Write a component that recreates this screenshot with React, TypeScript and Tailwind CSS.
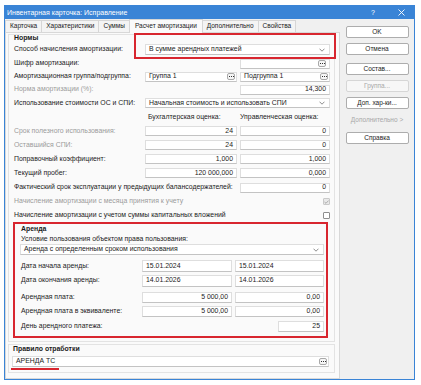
import React from "react";

const Dots = () => (
  <span className="flex h-[7px] w-[8px] shrink-0 items-center justify-center gap-[1px] rounded-[2px] border border-[#a9a9a9] bg-[#f6f6f6]">
    <span className="h-[1px] w-[1px] bg-[#333]" />
    <span className="h-[1px] w-[1px] bg-[#333]" />
    <span className="h-[1px] w-[1px] bg-[#333]" />
  </span>
);

const Chevron = () => (
  <svg width="6" height="4" viewBox="0 0 6 4" className="shrink-0">
    <path d="M0.5 0.7 L3 3.2 L5.5 0.7" fill="none" stroke="#707070" strokeWidth="0.8" />
  </svg>
);

type FP = { cls: string; children?: React.ReactNode; left?: boolean; dots?: boolean };
const F = ({ cls, children, left = false, dots = false }: FP) => (
  <div
    className={`flex shrink-0 items-center border border-[#dedede] border-b-[#c3c3c3] bg-white ${
      left ? "justify-between pl-[3px] pr-[1px]" : "justify-end px-[3px]"
    } ${cls}`}
  >
    {children != null && <span className="whitespace-nowrap leading-none">{children}</span>}
    {dots && <Dots />}
  </div>
);

const Combo = ({ cls, children }: { cls: string; children: React.ReactNode }) => (
  <div
    className={`flex items-center justify-between border border-[#dedede] border-b-[#c3c3c3] bg-white pl-[3px] pr-[4px] ${cls}`}
  >
    <span className="whitespace-nowrap leading-none">{children}</span>
    <Chevron />
  </div>
);

const Btn = ({ children, cls = "", disabled = false, noBorder = false }: { children: React.ReactNode; cls?: string; disabled?: boolean; noBorder?: boolean }) => (
  <div
    className={`flex h-[12px] w-[63px] items-center justify-center rounded-[2px] border text-[6.5px] ${
      noBorder ? "border-transparent bg-transparent text-[#a8a8a8]" : disabled ? "border-[#d6d6d6] bg-[#f7f7f7] text-[#a8a8a8]" : "border-[#adadad] bg-white"
    } ${cls}`}
  >
    {children}
  </div>
);

const Tab = ({ children, active = false }: { children: React.ReactNode; active?: boolean }) => (
  <div
    className={`-ml-px flex items-center border border-b-0 border-[#d6d6d6] text-[6.5px] first:ml-0 ${
      active ? "relative z-10 -mb-px h-[14px] bg-[#fafafa] px-[5px]" : "h-[12px] bg-[#f4f4f4] px-[4px]"
    }`}
  >
    {children}
  </div>
);

const gray = "text-[#9b9b9b]";

export default function App() {
  return (
    <div className="h-[385px] w-[421px] overflow-hidden bg-white pl-[4px] pt-[5px] font-['Liberation_Sans',Arial,sans-serif] text-[6.9px] leading-none text-[#1b1b1b]">
      <div className="flex h-[375px] w-[411px] flex-col border border-[#3a84d6] bg-[#f0f0f0]">
        {/* title bar */}
        <div className="flex h-[13px] shrink-0 items-center bg-[#3a84d6] pl-[2px] pr-[9px] text-[7px] text-white">
          <span>Инвентарная карточка: Исправление</span>
          <span className="ml-auto">?</span>
          <svg width="7" height="7" viewBox="0 0 7 7" className="ml-[23px]">
            <path d="M0.5 0.5 L6.5 6.5 M6.5 0.5 L0.5 6.5" stroke="white" strokeWidth="0.9" />
          </svg>
        </div>

        <div className="flex flex-1">
          {/* left side */}
          <div className="flex w-[335px] flex-col">
            <div className="relative z-10 flex h-[13px] items-end">
              <Tab>Карточка</Tab>
              <Tab>Характеристики</Tab>
              <Tab>Суммы</Tab>
              <Tab active>Расчет амортизации</Tab>
              <Tab>Дополнительно</Tab>
              <Tab>Свойства</Tab>
            </div>
            <div className="flex-1 border border-[#d8d8d8] bg-[#fafafa] pt-[1px]">
              {/* Нормы group */}
              <div className="ml-[2px] w-[327px] border border-[#e3e3e3] pb-[3px] pl-[5px] pr-[4px]">
                <div className="flex h-[7px] items-center font-bold">Нормы</div>
                <div className="flex h-[15px] items-center">
                  <span className="w-[131px] shrink-0 whitespace-nowrap">Способ начисления амортизации:</span>
                  <div className="relative">
                    <div className="absolute -bottom-[4px] -left-[11px] -right-[6px] -top-[11px] border-2 border-[#d8262f]" />
                    <Combo cls="h-[11px] w-[185px]">В сумме арендных платежей</Combo>
                  </div>
                </div>
                <div className="flex h-[13px] items-center">
                  <span className="w-[226px] shrink-0">Шифр амортизации:</span>
                  <F cls="h-[10px] w-[90px]" dots />
                </div>
                <div className="flex h-[13px] items-center">
                  <span className="w-[131px] shrink-0 whitespace-nowrap">Амортизационная группа/подгруппа:</span>
                  <F cls="h-[10px] w-[92px]" left dots>Группа 1</F>
                  <F cls="ml-[3px] h-[10px] w-[90px]" left dots>Подгруппа 1</F>
                </div>
                <div className="flex h-[13px] items-center">
                  <span className={`w-[226px] shrink-0 ${gray}`}>Норма амортизации (%):</span>
                  <F cls="h-[10px] w-[90px]">14,300</F>
                </div>
                <div className="flex h-[14px] items-center">
                  <span className="w-[131px] shrink-0 whitespace-nowrap">Использование стоимости ОС и СПИ:</span>
                  <Combo cls="h-[10px] w-[185px]">Начальная стоимость и использовать СПИ</Combo>
                </div>
                <div className="flex h-[14px] items-center">
                  <span className="w-[131px] shrink-0" />
                  <span className="w-[95px] shrink-0 whitespace-nowrap pl-[3px]">Бухгалтерская оценка:</span>
                  <span className="whitespace-nowrap">Управленческая оценка:</span>
                </div>
                <div className="flex h-[14px] items-center">
                  <span className={`w-[131px] shrink-0 whitespace-nowrap ${gray}`}>Срок полезного использования:</span>
                  <F cls="h-[10px] w-[92px]">24</F>
                  <F cls="ml-[3px] h-[10px] w-[90px]">0</F>
                </div>
                <div className="flex h-[14px] items-center">
                  <span className={`w-[131px] shrink-0 ${gray}`}>Оставшийся СПИ:</span>
                  <F cls="h-[10px] w-[92px]">24</F>
                  <F cls="ml-[3px] h-[10px] w-[90px]">0</F>
                </div>
                <div className="flex h-[14px] items-center">
                  <span className="w-[131px] shrink-0">Поправочный коэффициент:</span>
                  <F cls="h-[10px] w-[92px]">1,000</F>
                  <F cls="ml-[3px] h-[10px] w-[90px]">1,000</F>
                </div>
                <div className="flex h-[14px] items-center">
                  <span className="w-[131px] shrink-0">Текущий пробег:</span>
                  <F cls="h-[10px] w-[92px]">120 000,000</F>
                  <F cls="ml-[3px] h-[10px] w-[90px]">0,000</F>
                </div>
                <div className="flex h-[15px] items-center justify-between">
                  <span className="whitespace-nowrap">Фактический срок эксплуатации у предыдущих балансодержателей:</span>
                  <F cls="h-[10px] w-[90px]">0</F>
                </div>
                <div className="flex h-[13px] items-center justify-between">
                  <span className={gray}>Начисление амортизации с месяца принятия к учету</span>
                  <span className="flex h-[7px] w-[7px] items-center justify-center rounded-[1px] border border-[#c9c9c9] bg-[#e9e9e9]">
                    <svg width="5" height="4" viewBox="0 0 5 4">
                      <path d="M0.5 2 L2 3.3 L4.5 0.6" fill="none" stroke="#9c9c9c" strokeWidth="0.8" />
                    </svg>
                  </span>
                </div>
                <div className="flex h-[14px] items-center justify-between">
                  <span>Начисление амортизации с учетом суммы капитальных вложений</span>
                  <span className="h-[7px] w-[7px] rounded-[1px] border border-[#8e8e8e] bg-white" />
                </div>

                {/* Аренда red box */}
                <div className="-ml-[1px] w-[315px] border-2 border-[#d8262f] pb-[3px]">
                  <div className="flex h-[11px] items-center pl-[6px] font-bold">Аренда</div>
                  <div className="flex h-[8px] items-center pl-[6px]">Условие пользования объектом права пользования:</div>
                  <div className="ml-[5px] mt-[1px]">
                    <Combo cls="h-[11px] w-[304px]">Аренда с определенным сроком использования</Combo>
                  </div>
                  <div className="mt-[4px] flex h-[14px] items-center pl-[6px]">
                    <span className="w-[121px] shrink-0">Дата начала аренды:</span>
                    <F cls="h-[12px] w-[90px]" left>15.01.2024</F>
                    <F cls="ml-[3px] h-[12px] w-[89px]" left>15.01.2024</F>
                  </div>
                  <div className="flex h-[15px] items-center pl-[6px]">
                    <span className="w-[121px] shrink-0">Дата окончания аренды:</span>
                    <F cls="h-[12px] w-[90px]" left>14.01.2026</F>
                    <F cls="ml-[3px] h-[12px] w-[89px]" left>14.01.2026</F>
                  </div>
                  <div className="mt-[2px] flex h-[14px] items-center pl-[6px]">
                    <span className="w-[121px] shrink-0">Арендная плата:</span>
                    <F cls="h-[11px] w-[90px]">5 000,00</F>
                    <F cls="ml-[3px] h-[11px] w-[89px]">0,00</F>
                  </div>
                  <div className="flex h-[15px] items-center pl-[6px]">
                    <span className="w-[121px] shrink-0 whitespace-nowrap">Арендная плата в эквиваленте:</span>
                    <F cls="h-[11px] w-[90px]">5 000,00</F>
                    <F cls="ml-[3px] h-[11px] w-[89px]">0,00</F>
                  </div>
                  <div className="flex h-[14px] items-center pl-[6px]">
                    <span className="w-[257px] shrink-0">День арендного платежа:</span>
                    <F cls="h-[11px] w-[46px]">25</F>
                  </div>
                </div>
              </div>

              {/* Правило отработки */}
              <div className="ml-[2px] mt-[2px] w-[327px] border border-[#e3e3e3] pb-[5px]">
                <div className="flex h-[9px] items-center pl-[4px] font-bold">Правило отработки</div>
                <div className="relative ml-[3px] mt-[2px]">
                  <F cls="h-[11px] w-[317px]" left dots>АРЕНДА ТС</F>
                  <div className="absolute -left-[1px] top-[12px] h-[2px] w-[48px] bg-[#d8262f]" />
                </div>
              </div>
            </div>
          </div>

          {/* right buttons */}
          <div className="flex flex-1 flex-col items-center pt-[7px]">
            <Btn cls="border-[#8d8d8d]">OK</Btn>
            <Btn cls="mt-[5px]">Отмена</Btn>
            <Btn cls="mt-[8px]">Состав...</Btn>
            <Btn cls="mt-[5px]" disabled>Группа...</Btn>
            <Btn cls="mt-[5px]">Доп. хар-ки...</Btn>
            <Btn cls="mt-[5px]" noBorder>Дополнительно &gt;</Btn>
            <Btn cls="mt-[6px]">Справка</Btn>
          </div>
        </div>
      </div>
    </div>
  );
}
